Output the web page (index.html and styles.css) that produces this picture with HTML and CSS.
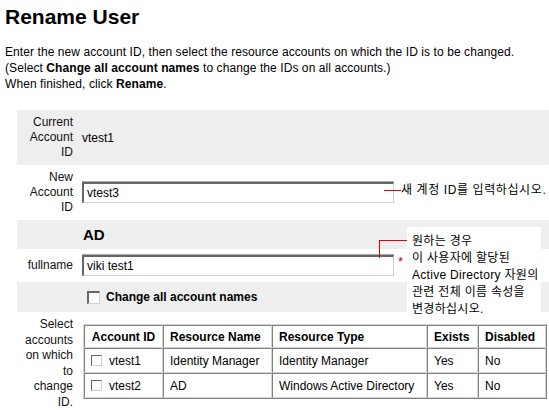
FILE: index.html
```html
<!DOCTYPE html>
<html>
<head>
<meta charset="utf-8">
<link rel="stylesheet" href="styles.css">
</head>
<body>
<h1 class="title">Rename User</h1>
<p class="intro">Enter the new account ID, then select the resource accounts on which the ID is to be changed.<br>(Select <b>Change all account names</b> to change the IDs on all accounts.)<br>When finished, click <b>Rename</b>.</p>
<div class="form">
  <div class="row shade r1">
    <div class="lbl">Current<br>Account<br>ID</div>
    <div class="val">vtest1</div>
  </div>
  <div class="row r2">
    <div class="lbl">New<br>Account<br>ID</div>
    <div class="val"><span class="field">vtest3</span></div>
  </div>
  <div class="row shade r3">
    <div class="lbl"></div>
    <div class="val res">AD</div>
  </div>
  <div class="row r4">
    <div class="lbl">fullname</div>
    <div class="val"><span class="field">viki test1</span><span class="req">*</span></div>
  </div>
  <div class="row shade r5">
    <div class="lbl"></div>
    <div class="val all"><span class="cb"></span><b>Change all account names</b></div>
  </div>
  <div class="row r6">
    <div class="lbl">Select<br>accounts<br>on which<br>to<br>change<br>ID.</div>
    <div class="val">
      <table class="accts">
        <thead>
          <tr><th class="c1">Account ID</th><th class="c2">Resource Name</th><th class="c3">Resource Type</th><th class="c4">Exists</th><th class="c5">Disabled</th></tr>
        </thead>
        <tbody>
          <tr><td><span class="cb sm"></span>vtest1</td><td>Identity Manager</td><td>Identity Manager</td><td>Yes</td><td>No</td></tr>
          <tr><td><span class="cb sm"></span>vtest2</td><td>AD</td><td>Windows Active Directory</td><td>Yes</td><td>No</td></tr>
        </tbody>
      </table>
    </div>
  </div>

  <div class="line h1line"></div>
  <div class="note n1">새 계정 ID를 입력하십시오.</div>

  <div class="note n2">원하는 경우<br>이 사용자에 할당된<br>Active Directory 자원의<br>관련 전체 이름 속성을<br>변경하십시오.</div>
  <div class="line h2line"></div>
  <div class="line v2line"></div>
</div>
</body>
</html>
```

FILE: styles.css
```css
html {
  overflow: hidden;
}
body {
  margin: 0;
  padding: 0 0 0 5px;
  background: #fff;
  color: #000;
  font-family: "Liberation Sans", Arial, "Noto Sans CJK KR", sans-serif;
  font-size: 12px;
}
.title {
  margin: 5px 0 0;
  font-size: 21px;
  line-height: 24px;
  font-weight: bold;
}
.intro {
  margin: 15px 0 0;
  line-height: 16px;
  letter-spacing: 0.08px;
}
.form {
  position: relative;
  margin: 18px 0 0 12px;
}
.row {
  display: flex;
  align-items: center;
}
.shade {
  background: repeating-conic-gradient(#ececec 0 25%, #f1f1f1 0 50%) 0 0 / 2px 2px;
}
.lbl {
  width: 56px;
  flex: none;
  text-align: right;
  line-height: 15px;
  color: #111;
}
.val {
  margin-left: 9px;
  display: flex;
  align-items: center;
}
.r1 { height: 55px; }
.r2 { height: 55px; }
.r3 { height: 29px; }
.r4 { height: 33px; }
.r5 { height: 30px; }
.r6 {
  align-items: flex-start;
  padding-top: 5px;
}
.r6 .lbl { line-height: 15.5px; }
.res {
  margin-left: 10px;
  font-size: 15px;
  font-weight: bold;
}
.field {
  box-sizing: border-box;
  width: 312px;
  height: 21px;
  line-height: 18px;
  padding-left: 3px;
  border-top: 2px solid #666;
  border-left: 2px solid #666;
  border-right: 1px solid #cfcfcf;
  border-bottom: 1px solid #cfcfcf;
  background: #fff;
  box-shadow: 0 -1px 0 #a8a8a8;
}
.req {
  color: #e00000;
  margin-left: 4px;
  align-self: flex-start;
  line-height: 14px;
  font-size: 13px;
}
.all {
  margin-left: 14px;
}
.cb {
  display: inline-block;
  box-sizing: border-box;
  width: 13px;
  height: 13px;
  margin-right: 6px;
  background: #fff;
  border-top: 2px solid #666;
  border-left: 2px solid #666;
  border-right: 1px solid #d0d0d0;
  border-bottom: 1px solid #d0d0d0;
}
.cb.sm {
  width: 11px;
  height: 11px;
  margin-right: 7px;
  vertical-align: -1px;
  border-width: 1px;
  border-color: #666 #d0d0d0 #d0d0d0 #666;
}
.accts {
  margin: 7px 0 0 1px;
  border-collapse: separate;
  border-spacing: 0;
  table-layout: fixed;
  width: 462px;
  border: 1px solid;
  border-color: #d4d4d4 #808080 #808080 #d4d4d4;
}
.accts th,
.accts td {
  box-sizing: border-box;
  border: 1px solid;
  border-color: #808080 #d4d4d4 #d4d4d4 #808080;
  padding: 0 6px;
  text-align: left;
  white-space: nowrap;
  overflow: hidden;
}
.accts th {
  height: 23px;
  font-weight: bold;
}
.accts td {
  height: 25px;
}
.accts th.c1 { width: 79px; text-align: center; padding: 0; }
.accts th.c2 { width: 109px; }
.accts th.c3 { width: 155px; }
.accts th.c4 { width: 51px; }
.accts th.c5 { width: 68px; }
.line {
  position: absolute;
  background: #e00000;
}
.h1line {
  left: 367px;
  top: 80px;
  width: 17px;
  height: 1px;
}
.note {
  position: absolute;
  font-family: "Liberation Sans", Arial, "Noto Sans CJK KR", sans-serif;
  font-size: 12px;
  white-space: nowrap;
  letter-spacing: 0.3px;
}
.n1 {
  left: 384px;
  top: 72px;
  line-height: 16px;
  letter-spacing: 0.6px;
}
.n2 {
  left: 390px;
  top: 117px;
  width: 134px;
  height: 86px;
  box-sizing: border-box;
  padding: 6px 0 0 5px;
  background: #fff;
  line-height: 17px;
}
.h2line {
  left: 362px;
  top: 130px;
  width: 28px;
  height: 1px;
}
.v2line {
  left: 362px;
  top: 130px;
  width: 1px;
  height: 18px;
}
```
